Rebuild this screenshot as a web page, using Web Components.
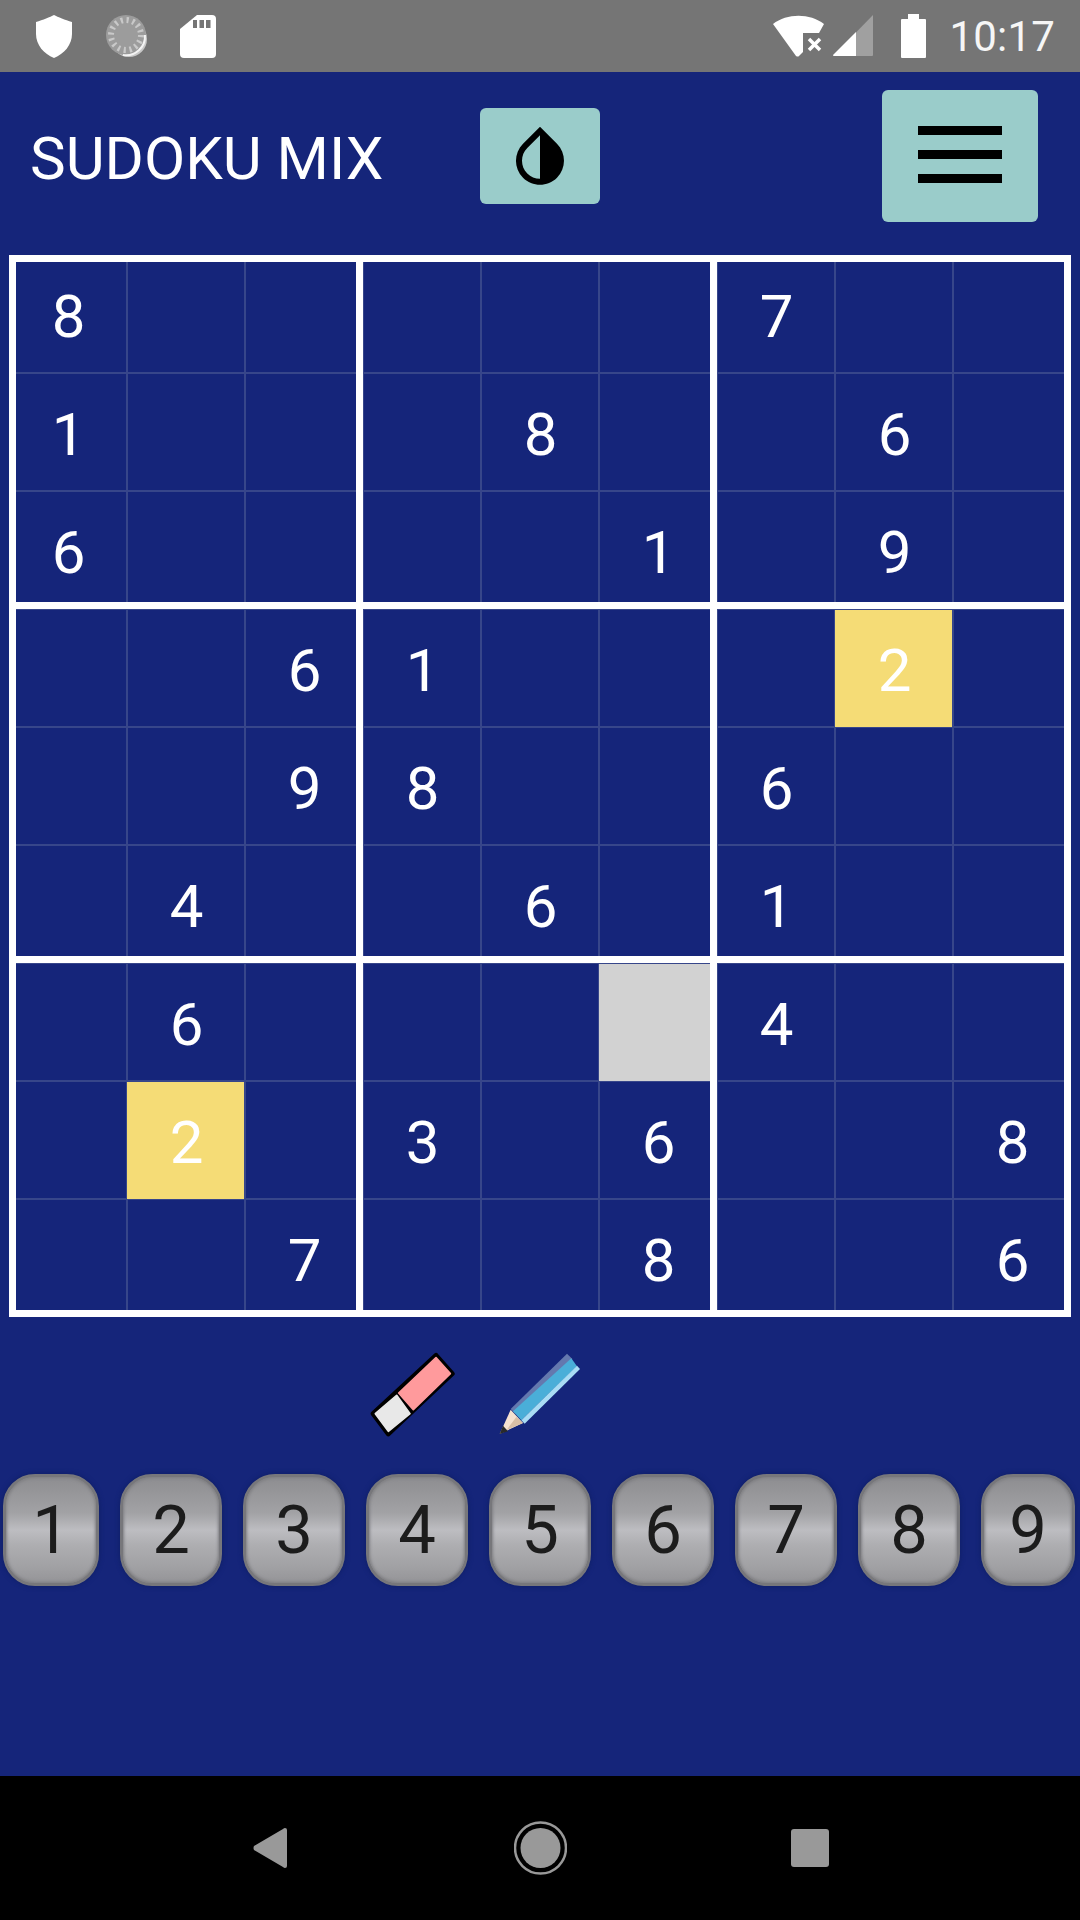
<!DOCTYPE html>
<html>
<head>
<meta charset="utf-8">
<title>Sudoku Mix</title>
<style>
    html, body { margin: 0; padding: 0; background: #15257a; }
</style>
</head>
<body>
<sudoku-app></sudoku-app>
<script>
class StatusBar extends HTMLElement {
    connectedCallback() {
        this.attachShadow({ mode: 'open' });
        this.shadowRoot.innerHTML = `
            <style>
                :host { display: flex; align-items: center; height: 72px; background: #757575; font-family: Roboto, sans-serif; }
                svg { display: block; flex: none; }
                .time { font-size: 42px; line-height: 72px; margin-left: 23px; padding-top: 1px; letter-spacing: 0.2px; color: #f6f6f6; }
                .left { display: flex; align-items: center; gap: 33px; padding-left: 36px; }
                .right { display: flex; align-items: center; margin-left: auto; padding-right: 25px; }
            </style>
            <div class="left">
                <svg width="36" height="44" viewBox="0 0 36 44"><path fill="#fff" d="M18 1 C22 3 29 6 36 8 V20 C36 31 28 40 18 44 C8 40 0 31 0 20 V8 C7 6 14 3 18 1Z"/></svg>
                <svg width="44" height="44" viewBox="0 0 44 44">
                    <circle cx="24" cy="25" r="18" fill="#c8c8c8"/>
                    <circle cx="21" cy="21" r="20" fill="#9c9c9c"/>
                    <circle cx="21" cy="21" r="15" fill="none" stroke="#c9c9c9" stroke-width="6" stroke-dasharray="2.2 3.7"/>
                    <path d="M40 21 A19 19 0 0 1 18 41" fill="none" stroke="#f4f4f4" stroke-width="2"/>
                </svg>
                <svg width="36" height="44" viewBox="0 0 36 44" style="margin-left:-2px"><path fill="#fff" d="M17 1 H32 Q36 1 36 5 V40 Q36 44 32 44 H4 Q0 44 0 40 V15Z"/><path fill="#757575" d="M13 6 h4 v8 h-4z M19.500 6 h4.500 v8 h-4.500z M26 6 h4.500 v8 h-4.500z"/></svg>
            </div>
            <div class="right">
                <svg width="52" height="42" viewBox="0 0 52 42"><path fill="#fff" d="M0 9 C14 -2 37 -2 51 9 L46 18 H30 V37 L26 41 Q25 42 23 41Z"/><path stroke="#fff" stroke-width="3.500" d="M36 24 L47 35 M47 24 L36 35"/></svg>
                <svg width="41" height="42" viewBox="0 0 41 42" style="margin-left:8px"><path fill="#a0a0a0" d="M40 0 V40 Q40 41 39 41 H0 Z"/><path fill="#fff" d="M23 17 V41 H1 Q0 41 0 40Z"/></svg>
                <svg width="25" height="44" viewBox="0 0 25 44" style="margin-left:27px"><path fill="#fff" d="M7 0 H18 V5 H24 Q25 5 25 6 V43 Q25 44 24 44 H1 Q0 44 0 43 V6 Q0 5 1 5 H7Z"/></svg>
                <span class="time">10:17</span>
            </div>
        `;
    }
}

class AppHeader extends HTMLElement {
    connectedCallback() {
        this.attachShadow({ mode: 'open' });
        this.shadowRoot.innerHTML = `
            <style>
                :host { display: flex; align-items: center; box-sizing: border-box; height: 183px; padding-bottom: 15px; color: #fff; font-family: Roboto, sans-serif; }
                h1 { margin: 0; width: 450px; padding: 5px 0 0 30px; font-size: 60px; font-weight: 400; line-height: 70px; white-space: nowrap; }
                button { display: flex; align-items: center; justify-content: center; flex: none; padding: 0; border: 0; border-radius: 6px; background: #9accca; }
                .theme { width: 120px; height: 96px; }
                .menu { width: 156px; height: 132px; margin-left: auto; margin-right: 42px; flex-direction: column; gap: 15px; padding-bottom: 3px; }
                .menu i { display: block; width: 84px; height: 9px; background: #000; }
            </style>
            <h1>SUDOKU MIX</h1>
            <button class="theme" aria-label="theme">
                <svg width="72" height="72" viewBox="0 0 24 24"><path d="M17.660 7.930L12 2.270 6.340 7.930c-3.120 3.120-3.120 8.190 0 11.310C7.900 20.800 9.950 21.580 12 21.580c2.050 0 4.100-.78 5.660-2.340 3.120-3.120 3.120-8.190 0-11.310zM12 19.590c-1.600 0-3.110-.62-4.240-1.760C6.620 16.690 6 15.190 6 13.590s.62-3.110 1.760-4.240L12 5.100v14.490z"/></svg>
            </button>
            <button class="menu" aria-label="menu"><i></i><i></i><i></i></button>
        `;
    }
}

class SudokuCell extends HTMLElement {
    connectedCallback() {
        this.attachShadow({ mode: 'open' });
        const r = +this.getAttribute('row');
        const c = +this.getAttribute('col');
        const line = '#37468a';
        const fill = this.getAttribute('fill');
        // thick lines first so they paint over the thin ones
        const shadows = [];
        if (c === 0) shadows.push('inset 7px 0 0 #fff');
        if (r === 0) shadows.push('inset 0 7px 0 #fff');
        if (c % 3 === 2) shadows.push('inset -7px 0 0 #fff');
        if (r % 3 === 2) shadows.push('inset 0 -7px 0 #fff');
        shadows.push(`inset 0 1px 0 ${line}`, `inset -1px 0 0 ${line}`);
        if (!fill) {
            shadows.push(`inset 1px 0 0 ${line}`, `inset 0 -1px 0 ${line}`);
        }
        this.shadowRoot.innerHTML = `
            <style>
                :host {
                    display: flex; align-items: center; justify-content: center;
                    box-sizing: border-box; padding: 6px 0 0 1px;
                    font-size: 60px; line-height: 70px; color: #fff;
                    background: ${fill || 'transparent'};
                    box-shadow: ${shadows.join(', ')};
                }
            </style>
            <slot></slot>
        `;
    }
}

class SudokuBoard extends HTMLElement {
    connectedCallback() {
        this.attachShadow({ mode: 'open' });
        this.shadowRoot.innerHTML = `
            <style>
                :host { display: grid; grid-template-columns: repeat(9, 118px); grid-auto-rows: 118px; margin-left: 9px; width: 1062px; font-family: Roboto, sans-serif; }
            </style>
            <slot></slot>
        `;
        const rows = [
            '8.....7..',
            '1...8..6.',
            '6....1.9.',
            '..61...y.',
            '..98..6..',
            '.4..6.1..',
            '.6...g4..',
            '.y.3.6..8',
            '..7..8..6'
        ];
        rows.forEach((row, r) => {
            [...row].forEach((ch, c) => {
                const cell = document.createElement('sudoku-cell');
                cell.setAttribute('row', r);
                cell.setAttribute('col', c);
                if (ch === 'g') {
                    cell.setAttribute('fill', '#d2d2d2');
                } else if (ch === 'y') {
                    cell.setAttribute('fill', '#f5dc76');
                    cell.textContent = '2';
                } else if (ch !== '.') {
                    cell.textContent = ch;
                }
                this.appendChild(cell);
            });
        });
    }
}

class ToolRow extends HTMLElement {
    connectedCallback() {
        this.attachShadow({ mode: 'open' });
        this.shadowRoot.innerHTML = `
            <style>
                :host { display: flex; align-items: flex-start; gap: 40px; padding: 33px 0 0 370px; height: 124px; }
                svg { display: block; flex: none; }
                .pencil { margin-top: 3px; }
                .eraser { margin-top: 1px; }
            </style>
            <svg class="eraser" width="88" height="88" viewBox="60 62 264 264">
                <path d="M258 76 L306 130 L115 310 L70 250Z" fill="#000" stroke="#000" stroke-width="16" stroke-linejoin="round"/>
                <path d="M258 82 L301 130 L190 238 L146 188Z" fill="#ff9a9c" stroke="#ff9a9c" stroke-width="5" stroke-linejoin="round"/>
                <path d="M140 195 L180 250 L115 303 L76 250Z" fill="#e8e8e8" stroke="#e8e8e8" stroke-width="5" stroke-linejoin="round"/>
            </svg>
            <svg class="pencil" width="84" height="84" viewBox="445 70 252 252">
                <path d="M483 238 L652 72 L668 88 L497 252Z" fill="#6478ae"/>
                <path d="M490 245 L665 86 L682 110 L515 272Z" fill="#4aaed8"/>
                <path d="M515 272 L682 108 L691 118 L525 282Z" fill="#a9dcf4"/>
                <path d="M483 240 L520 280 L450 313Z" fill="#f6e2d0"/>
                <path d="M500 262 L520 280 L470 302Z" fill="#d9bfa6"/>
                <path d="M460 288 L475 305 L450 313Z" fill="#2a2a2a"/>
            </svg>
        `;
    }
}

class NumKey extends HTMLElement {
    connectedCallback() {
        this.attachShadow({ mode: 'open' });
        this.shadowRoot.innerHTML = `
            <style>
                :host {
                    display: flex; align-items: center; justify-content: center;
                    box-sizing: border-box; height: 112px;
                    border: 3px solid #77777b; border-radius: 32px;
                    background: linear-gradient(#8d8d90 0%, #a2a2a5 34%, #bdbdc1 50%, #aeaeb1 64%, #a0a0a3 86%, #949497 100%);
                    box-shadow: 0 0 4px 1px #10206a, inset 0 0 3px 1px #7e7e82;
                    color: #1c1c1c; font-family: Roboto, sans-serif; font-size: 67px; font-weight: 400; line-height: 1;
                }
            </style>
            <slot></slot>
        `;
    }
}

class NumberPad extends HTMLElement {
    connectedCallback() {
        this.attachShadow({ mode: 'open' });
        this.shadowRoot.innerHTML = `
            <style>
                :host { display: grid; grid-template-columns: 96px repeat(7, 102px) 94px; column-gap: 21px; padding-left: 3px; }
            </style>
            <slot></slot>
        `;
    }
}

class NavBar extends HTMLElement {
    connectedCallback() {
        this.attachShadow({ mode: 'open' });
        this.shadowRoot.innerHTML = `
            <style>
                :host { display: flex; align-items: center; height: 144px; background: #000; padding-left: 253px; box-sizing: border-box; }
                svg { display: block; flex: none; }
            </style>
            <svg width="34" height="40" viewBox="0 0 34 40"><path fill="#999" d="M32 0 Q34 0 34 2 V38 Q34 40 32 40 Q31 40 30 39 L1 22 Q0 20 1 18 L30 1 Q31 0 32 0Z"/></svg>
            <svg width="53" height="54" viewBox="0 0 53 54" style="margin-left:227px">
                <circle cx="26.500" cy="27" r="25.500" fill="none" stroke="#999" stroke-width="2.500"/>
                <circle cx="26.500" cy="27" r="20" fill="#999"/>
            </svg>
            <svg width="38" height="38" viewBox="0 0 38 38" style="margin-left:224px"><rect width="38" height="38" rx="3" fill="#999"/></svg>
        `;
    }
}

class SudokuApp extends HTMLElement {
    connectedCallback() {
        this.attachShadow({ mode: 'open' });
        const keys = [1, 2, 3, 4, 5, 6, 7, 8, 9].map(n => `<num-key>${n}</num-key>`).join('');
        this.shadowRoot.innerHTML = `
            <style>
                :host { display: flex; flex-direction: column; width: 1080px; height: 1920px; overflow: hidden; background: #15257a; }
                nav-bar { margin-top: auto; }
            </style>
            <status-bar></status-bar>
            <app-header></app-header>
            <sudoku-board></sudoku-board>
            <tool-row></tool-row>
            <number-pad>${keys}</number-pad>
            <nav-bar></nav-bar>
        `;
    }
}

customElements.define('status-bar', StatusBar);
customElements.define('app-header', AppHeader);
customElements.define('sudoku-cell', SudokuCell);
customElements.define('sudoku-board', SudokuBoard);
customElements.define('tool-row', ToolRow);
customElements.define('num-key', NumKey);
customElements.define('number-pad', NumberPad);
customElements.define('nav-bar', NavBar);
customElements.define('sudoku-app', SudokuApp);
</script>
</body>
</html>
